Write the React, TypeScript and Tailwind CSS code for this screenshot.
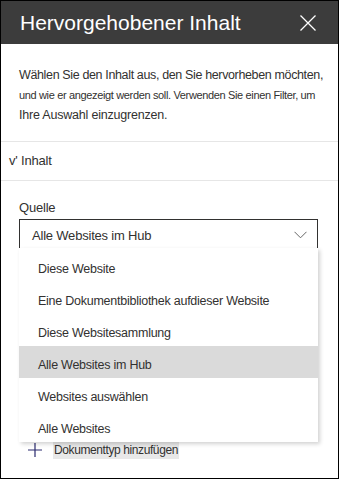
const options = [
  "Diese Website",
  "Eine Dokumentbibliothek aufdieser Website",
  "Diese Websitesammlung",
  "Alle Websites im Hub",
  "Websites auswählen",
  "Alle Websites",
];

export default function App() {
  const selected = "Alle Websites im Hub";

  return (
    <div
      className="relative w-[339px] h-[479px] overflow-hidden border border-black bg-white text-[#323130]"
      style={{ fontFamily: '"Liberation Sans", Arial, sans-serif' }}
    >
      {/* Kopfzeile */}
      <div className="flex h-[43px] items-center justify-between bg-[#3c3c3c] pl-[19px] pr-[22px]">
        <h1 className="text-[21px] text-white">Hervorgehobener Inhalt</h1>
        <svg width="16" height="16" viewBox="0 0 16 16" className="text-white">
          <path d="M0.5 0.5l15 15M15.5 0.5l-15 15" stroke="currentColor" strokeWidth="1.3" fill="none" />
        </svg>
      </div>

      {/* Beschreibung */}
      <div className="px-[18px] pt-[21px] pb-[16px] whitespace-nowrap">
        <p className="text-[12.5px] leading-[20px] tracking-[-0.36px]">Wählen Sie den Inhalt aus, den Sie hervorheben möchten,</p>
        <p className="text-[11px] leading-[20px] tracking-[-0.35px]">und wie er angezeigt werden soll. Verwenden Sie einen Filter, um</p>
        <p className="text-[12.5px] leading-[20px] tracking-[-0.2px]">Ihre Auswahl einzugrenzen.</p>
      </div>

      <div className="border-t border-[#e6e6e6]" />
      <div className="flex h-[38px] items-center pl-[8px] text-[13px] tracking-[-0.2px]">v' Inhalt</div>
      <div className="border-t border-[#e6e6e6]" />

      {/* Quelle */}
      <div className="relative pl-[18px] pr-[20px] pt-[18px]">
        <label className="block text-[13px] leading-[18px] tracking-[-0.2px]">Quelle</label>
        <div className="mt-[2px] flex h-[31px] items-center justify-between border border-[#323130] pl-[12px] pr-[10px] text-[13px] tracking-[-0.2px]">
          <span className="pt-[2px]">{selected}</span>
          <svg width="13" height="8" viewBox="0 0 13 8" className="text-[#666]">
            <path d="M0.5 0.8l6 6 6-6" stroke="currentColor" strokeWidth="1" fill="none" />
          </svg>
        </div>

        {/* Menü */}
        <div className="absolute left-[18px] right-[20px] top-[67px] z-10 bg-white pt-[2px] shadow-[2px_2px_4px_rgba(0,0,0,0.18)]">
          {options.map((o) => (
            <div
              key={o}
              className={`flex h-[32px] items-center pl-[19px] pt-[6px] text-[12.5px] tracking-[-0.25px] ${o === selected ? "bg-[#dadada]" : ""}`}
            >
              {o}
            </div>
          ))}
        </div>

        <div className="mt-[191px] flex items-center gap-[10px] pl-[8px] text-[12px] tracking-[-0.4px]">
          <svg width="16" height="16" viewBox="0 0 16 16" className="text-[#2a2a6e]">
            <path d="M8 1v14M1 8h14" stroke="currentColor" strokeWidth="1.2" fill="none" />
          </svg>
          <span className="bg-[#e8e8e8] px-[1px]">Dokumenttyp hinzufügen</span>
        </div>
      </div>
    </div>
  );
}
